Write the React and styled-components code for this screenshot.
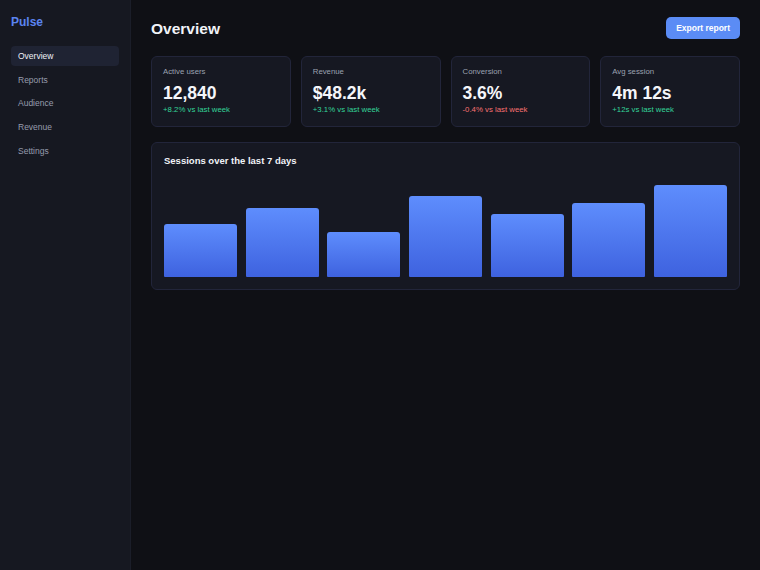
import styled, { createGlobalStyle } from 'styled-components';

const GlobalStyle = createGlobalStyle`
  html, body {
    margin: 0;
    padding: 0;
    height: 100%;
    background: #0f1015;
  }
  #root {
    height: 100%;
  }
  * {
    box-sizing: border-box;
  }
`;

const navItems = ['Overview', 'Reports', 'Audience', 'Revenue', 'Settings'];

const stats = [
  { label: 'Active users', value: '12,840', change: '+8.2% vs last week', up: true },
  { label: 'Revenue', value: '$48.2k', change: '+3.1% vs last week', up: true },
  { label: 'Conversion', value: '3.6%', change: '-0.4% vs last week', up: false },
  { label: 'Avg session', value: '4m 12s', change: '+12s vs last week', up: true },
];

// bar heights in px, chart area is 98px tall
const sessions = [53, 69, 45, 81, 63, 74, 92];

export default function App() {
  return (
    <>
      <GlobalStyle />
      <Layout>
        <Sidebar>
          <Brand>Pulse</Brand>
          <Nav>
            {navItems.map((item, i) => (
              <NavItem key={item} $active={i === 0}>
                {item}
              </NavItem>
            ))}
          </Nav>
        </Sidebar>
        <Main>
          <Header>
            <Title>Overview</Title>
            <ExportBtn>Export report</ExportBtn>
          </Header>
          <StatGrid>
            {stats.map((s) => (
              <StatCard key={s.label}>
                <StatLabel>{s.label}</StatLabel>
                <StatValue>{s.value}</StatValue>
                <StatChange $up={s.up}>{s.change}</StatChange>
              </StatCard>
            ))}
          </StatGrid>
          <ChartCard>
            <ChartTitle>Sessions over the last 7 days</ChartTitle>
            <Bars>
              {sessions.map((v, i) => (
                <Bar key={i} style={{ height: `${v}px` }} />
              ))}
            </Bars>
          </ChartCard>
        </Main>
      </Layout>
    </>
  );
}

const Layout = styled.div`
  display: flex;
  min-height: 100%;
  font-family: 'Liberation Sans', Arial, sans-serif;
`;

const Sidebar = styled.aside`
  width: 131px;
  flex-shrink: 0;
  background: #161821;
  border-right: 1px solid #1b1e29;
  padding: 14.5px 11px;
`;

const Brand = styled.div`
  color: #5b84f0;
  font-size: 12px;
  font-weight: 700;
  line-height: 14px;
  margin-bottom: 17.5px;
`;

const Nav = styled.nav`
  display: flex;
  flex-direction: column;
  gap: 3.7px;
`;

const NavItem = styled.div`
  height: 20px;
  padding: 0 7px;
  font-size: 8.5px;
  line-height: 20px;
  border-radius: 4px;
  color: ${(p) => (p.$active ? '#eef0f6' : '#969cad')};
  background: ${(p) => (p.$active ? '#1f2333' : 'transparent')};
`;

const Main = styled.main`
  flex: 1;
  padding: 17px 20px;
`;

const Header = styled.div`
  display: flex;
  justify-content: space-between;
  align-items: center;
  height: 22px;
  margin-bottom: 17px;
`;

const Title = styled.h1`
  margin: 0;
  color: #f1f3f8;
  font-size: 15.5px;
  font-weight: 700;
  line-height: 18px;
  padding-top: 1px;
`;

const ExportBtn = styled.button`
  border: none;
  border-radius: 5px;
  background: #5b8cf5;
  color: #ffffff;
  font-family: inherit;
  font-size: 8.5px;
  font-weight: 700;
  height: 22px;
  padding: 0 10px;
  cursor: pointer;
`;

const StatGrid = styled.div`
  display: grid;
  grid-template-columns: repeat(4, 1fr);
  gap: 10px;
  margin-bottom: 14.5px;
`;

const StatCard = styled.div`
  background: #161822;
  border: 1px solid #22253a;
  border-radius: 6px;
  padding: 10px 11px 11px;
`;

const StatLabel = styled.div`
  color: #9ba1b1;
  font-size: 7.8px;
  line-height: 10px;
`;

const StatValue = styled.div`
  color: #f5f6fa;
  font-size: 17.5px;
  font-weight: 700;
  line-height: 22px;
  margin-top: 5px;
`;

const StatChange = styled.div`
  color: ${(p) => (p.$up ? '#34d399' : '#f87171')};
  font-size: 7.8px;
  line-height: 10px;
  margin-top: 1px;
`;

const ChartCard = styled.section`
  background: #161822;
  border: 1px solid #22253a;
  border-radius: 6px;
  padding: 12px 12px 12px;
`;

const ChartTitle = styled.h2`
  margin: 0 0 12px;
  color: #f1f3f8;
  font-size: 9.5px;
  font-weight: 700;
  line-height: 12px;
`;

const Bars = styled.div`
  display: flex;
  align-items: flex-end;
  gap: 8.4px;
  height: 98px;
`;

const Bar = styled.div`
  flex: 1;
  border-radius: 3px 3px 1px 1px;
  background: linear-gradient(180deg, #5e8dfd 0%, #3e62df 100%);
`;
